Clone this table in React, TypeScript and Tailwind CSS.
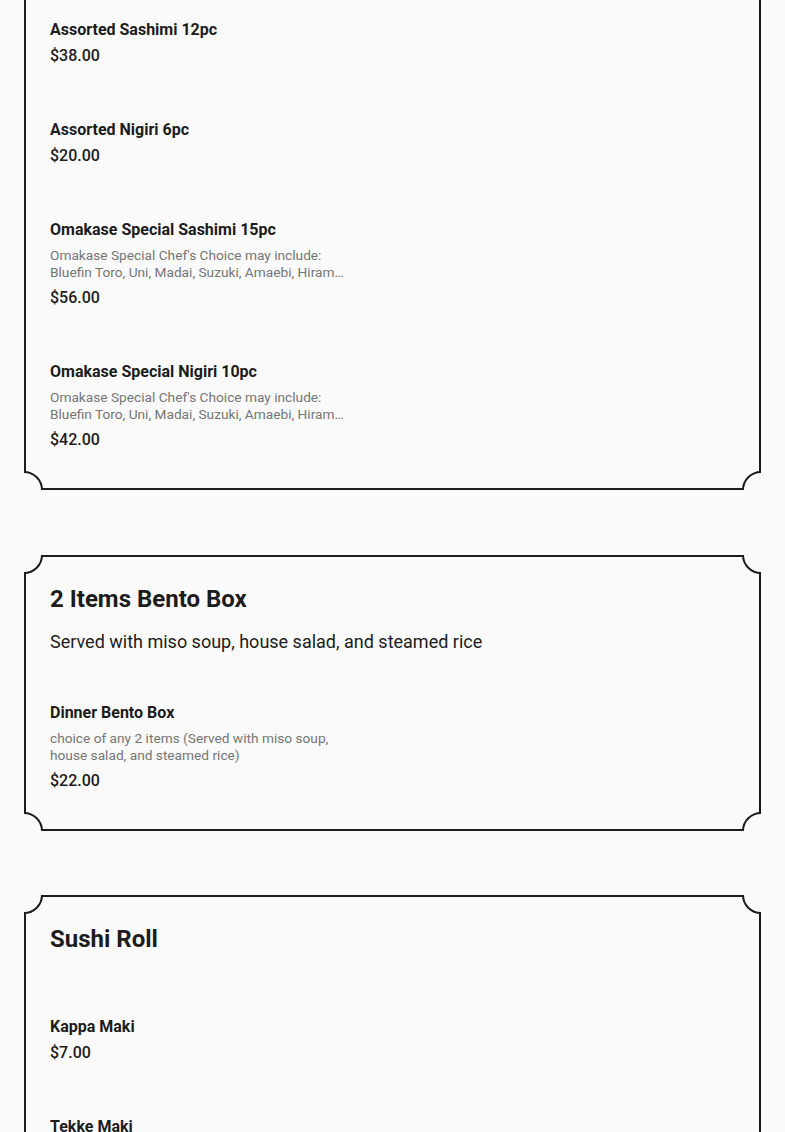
import React from "react";

type Item = { name: string; desc?: string[]; price: string };

const omakaseDesc = [
  "Omakase Special Chef's Choice may include:",
  "Bluefin Toro, Uni, Madai, Suzuki, Amaebi, Hiramasa, Hotate, Ikura",
];

const Corner = ({ pos }: { pos: string }) => (
  <div
    className={`absolute ${pos} w-[38px] h-[38px] rounded-full border-2 border-[#1c1c1c] bg-[#fafafa]`}
  />
);

const MenuItem = ({ item }: { item: Item }) => (
  <div className="flex flex-col">
    <div className="text-[16px] leading-6 font-bold text-[#1c1c1c]">{item.name}</div>
    {item.desc && (
      <div className="mt-[5px] max-w-[299px] text-[13.7px] leading-[17px] text-[#757575]">
        {item.desc.map((line) => (
          <div key={line} className="truncate">
            {line}
          </div>
        ))}
      </div>
    )}
    <div className={`${item.desc ? "mt-[5px]" : "mt-[2px]"} text-[16px] leading-6 font-medium text-[#1c1c1c]`}>
      {item.price}
    </div>
  </div>
);

const Card = ({
  title,
  subtitle,
  items,
  className = "",
  headClass = "",
  bodyClass = "pt-[26px]",
}: {
  title?: string;
  subtitle?: string;
  items: Item[];
  className?: string;
  headClass?: string;
  bodyClass?: string;
}) => (
  <div className={`relative overflow-hidden ${className}`}>
    <div className={`border-2 border-[#1c1c1c] px-6 pb-[36px] ${bodyClass}`}>
      {title && (
        <div className={`flex flex-col ${headClass}`}>
          <h2 className="text-[24px] leading-8 font-bold text-[#1c1c1c]">{title}</h2>
          {subtitle && (
            <p className="mt-[13px] text-[18px] leading-7 text-[#1c1c1c]">{subtitle}</p>
          )}
        </div>
      )}
      <div className="flex flex-col gap-[50px]">
        {items.map((it) => (
          <MenuItem key={it.name} item={it} />
        ))}
      </div>
    </div>
    <Corner pos="-top-[19px] -left-[19px]" />
    <Corner pos="-top-[19px] -right-[19px]" />
    <Corner pos="-bottom-[19px] -left-[19px]" />
    <Corner pos="-bottom-[19px] -right-[19px]" />
  </div>
);

export default function App() {
  return (
    <div
      className="min-h-screen bg-[#fafafa] overflow-hidden"
      style={{ fontFamily: "Roboto, 'Noto Sans', sans-serif" }}
    >
      <div className="px-6 flex flex-col pb-16">
        <Card
          className="-mt-[50px]"
          bodyClass="pt-[66px]"
          items={[
            { name: "Assorted Sashimi 12pc", price: "$38.00" },
            { name: "Assorted Nigiri 6pc", price: "$20.00" },
            { name: "Omakase Special Sashimi 15pc", desc: omakaseDesc, price: "$56.00" },
            { name: "Omakase Special Nigiri 10pc", desc: omakaseDesc, price: "$42.00" },
          ]}
        />
        <Card
          className="mt-[65px]"
          title="2 Items Bento Box"
          subtitle="Served with miso soup, house salad, and steamed rice"
          headClass="mb-[45px]"
          items={[
            {
              name: "Dinner Bento Box",
              desc: ["choice of any 2 items (Served with miso soup,", "house salad, and steamed rice)"],
              price: "$22.00",
            },
          ]}
        />
        <Card
          className="mt-16"
          title="Sushi Roll"
          headClass="mb-[60px]"
          items={[
            { name: "Kappa Maki", price: "$7.00" },
            { name: "Tekke Maki", price: "$8.00" },
            { name: "California Roll", price: "$9.00" },
          ]}
        />
      </div>
    </div>
  );
}
